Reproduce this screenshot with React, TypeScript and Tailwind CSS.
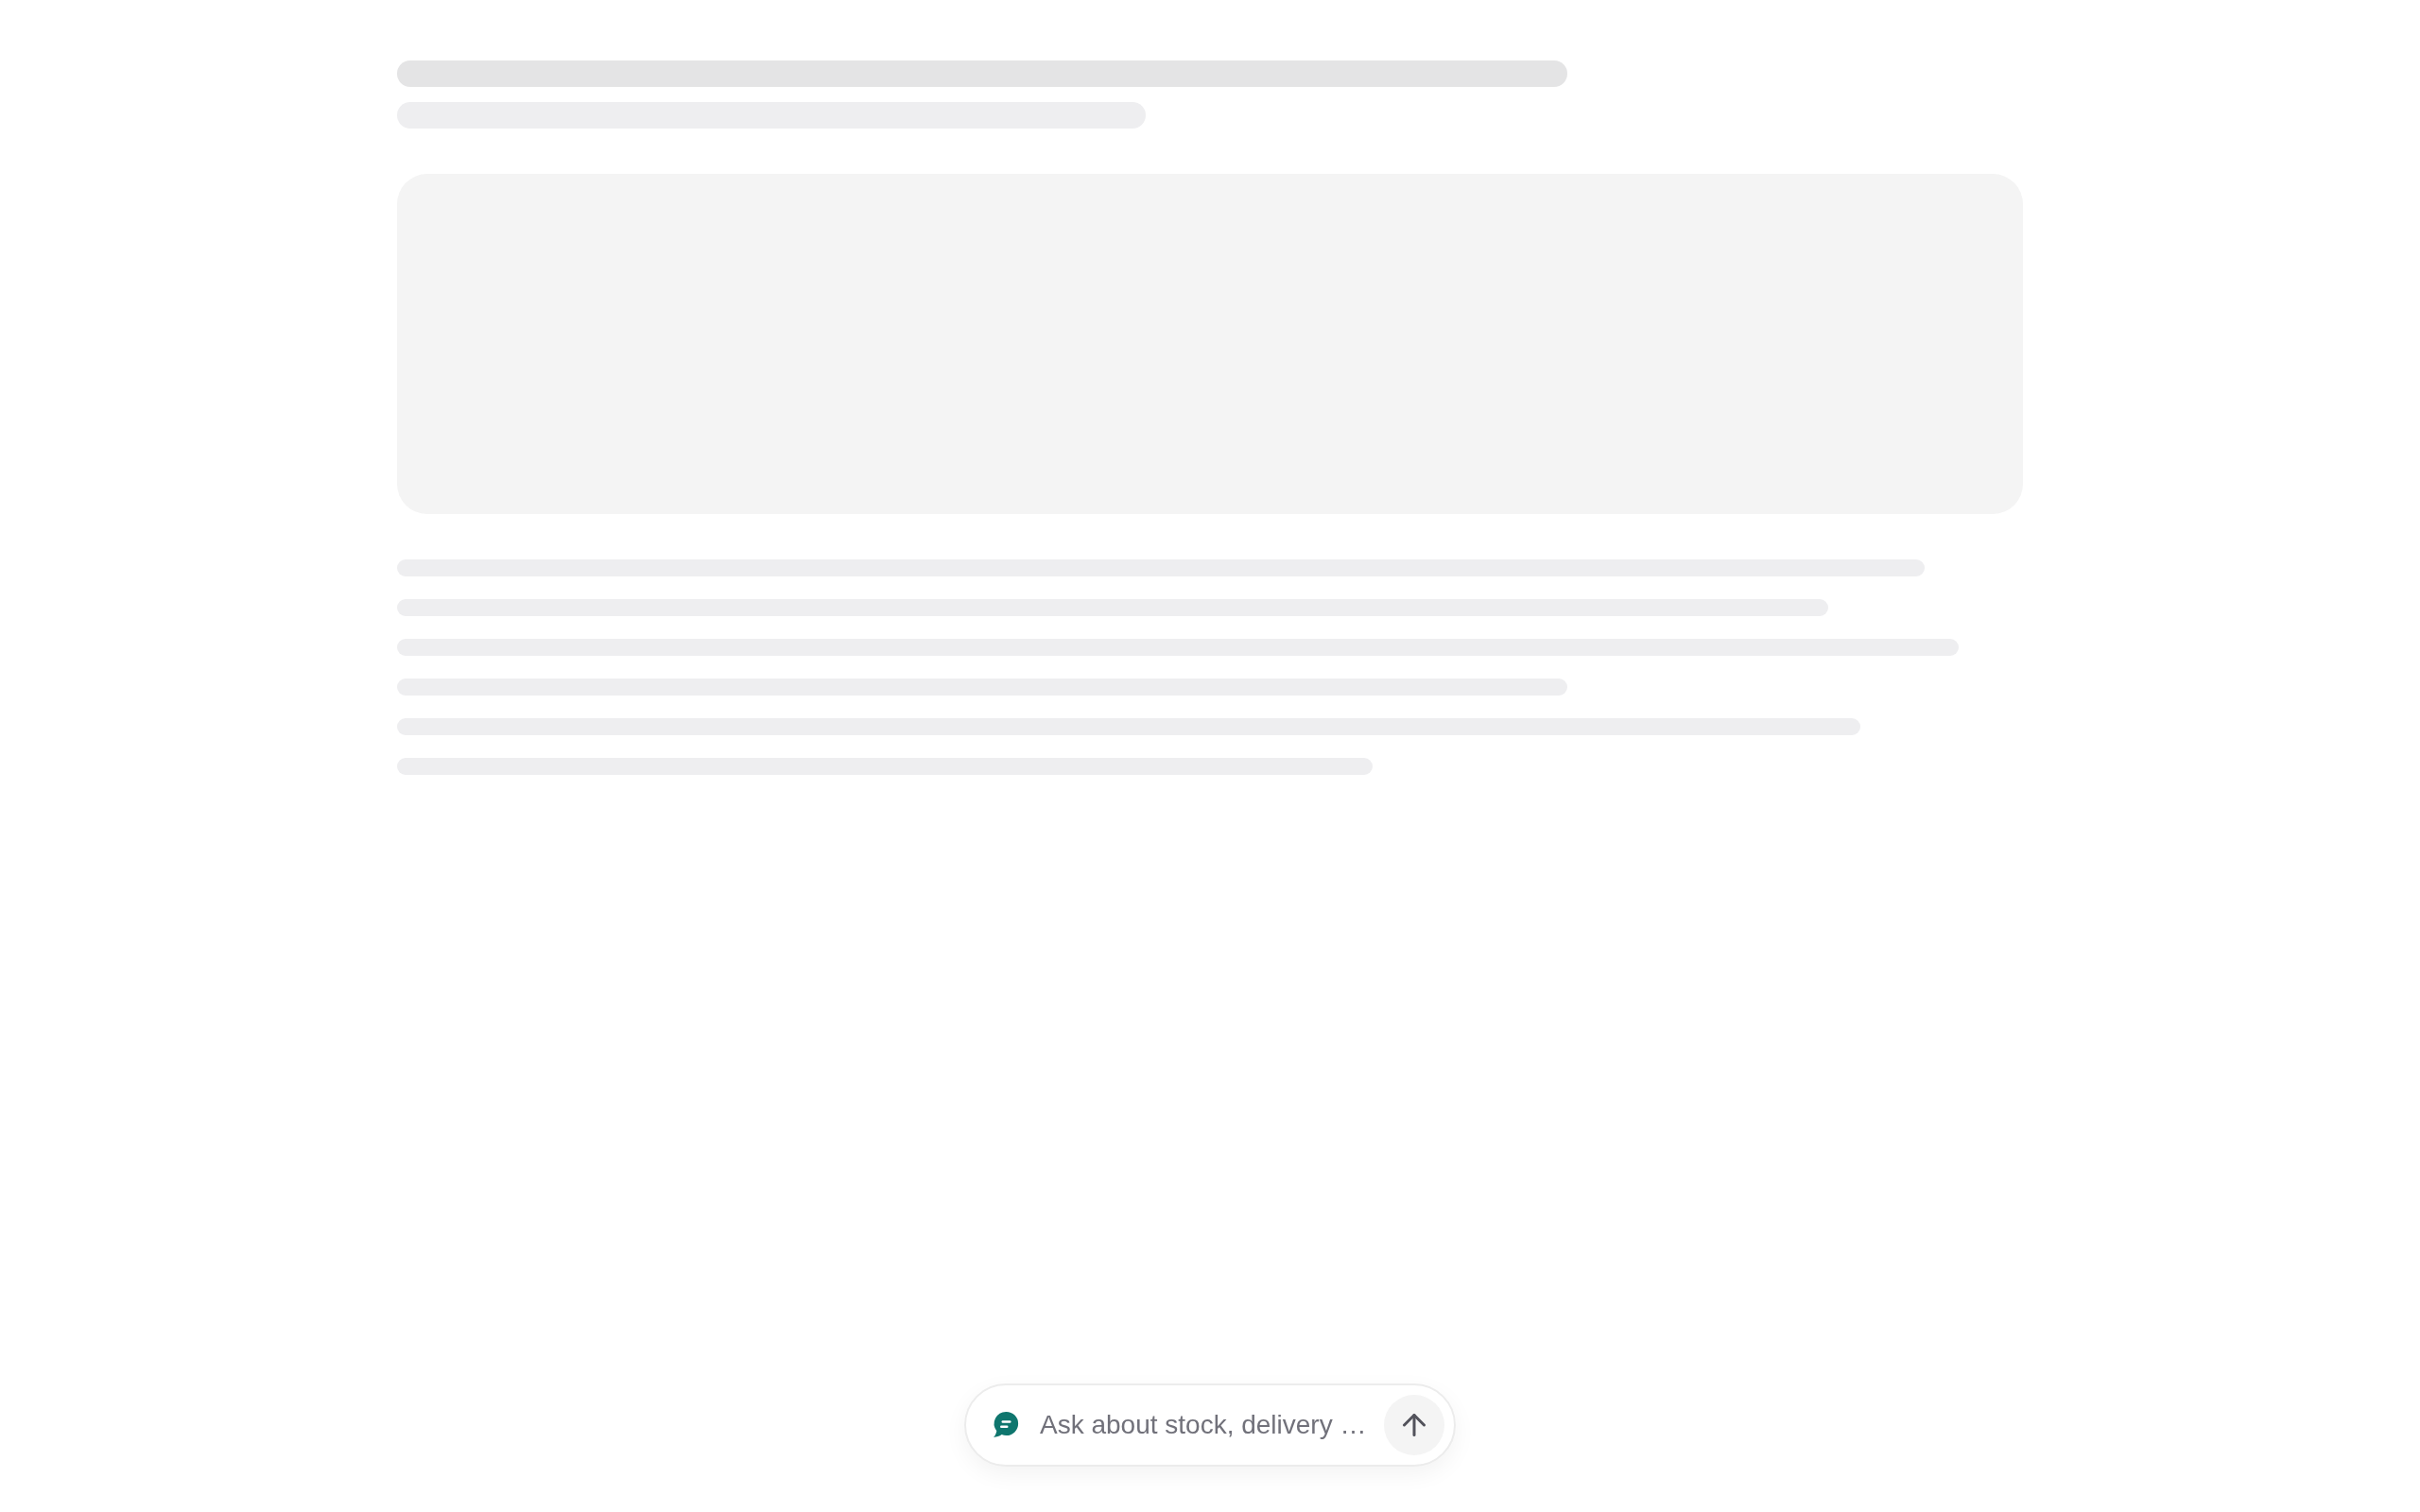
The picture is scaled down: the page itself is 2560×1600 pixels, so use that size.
import React from 'react'
import { ArrowUp } from 'lucide-react'

const lines = [
  { id: 1, width: 'w-[1616px]' },
  { id: 2, width: 'w-[1514px]' },
  { id: 3, width: 'w-[1652px]' },
  { id: 4, width: 'w-[1238px]' },
  { id: 5, width: 'w-[1548px]' },
  { id: 6, width: 'w-[1032px]' },
]

const ChatIcon = () => (
  <svg viewBox="0 0 32 32" className="w-8 h-8 shrink-0" aria-hidden="true">
    <path
      d="M18.5 1.900a12.600 12.600 0 1 1 0 25.200c-1.700 0-3.300-.3-4.800-1C11.200 27.800 8.500 28.800 5 29c1.700-1.800 2.800-3.900 3.300-6.800A12.600 12.600 0 0 1 18.500 1.900Z"
      fill="#0f766e"
    />
    <rect x="13.500" y="11.200" width="10" height="2.500" rx="1.250" fill="#ffffff" />
    <rect x="12" y="16.600" width="8.500" height="2.500" rx="1.250" fill="#ffffff" />
  </svg>
)

export default function App() {
  return (
    <div className="relative min-h-screen bg-white font-['Liberation_Sans',Arial,sans-serif]">
      <main className="w-[1720px] mx-auto pt-16">
        <div className="flex flex-col gap-4">
          <div className="h-7 w-[1238px] rounded-full bg-[#e4e4e5]" />
          <div className="h-7 w-[792px] rounded-full bg-[#eeeef0]" />
        </div>

        <div className="mt-12 h-[360px] rounded-[32px] bg-[#f4f4f4]" />

        <div className="mt-12 flex flex-col gap-6">
          {lines.map((line) => (
            <div key={line.id} className={`h-[18px] rounded-full bg-[#eeeef0] ${line.width}`} />
          ))}
        </div>
      </main>

      <div className="fixed bottom-12 left-1/2 -translate-x-1/2 w-[520px] h-[88px] flex items-center pl-6 pr-[10px] rounded-full bg-white border-2 border-[#ececec] shadow-[0_8px_24px_rgba(0,0,0,0.05)]">
        <ChatIcon />
        <span className="ml-[22px] flex-1 whitespace-nowrap text-[28px] leading-9 text-[#71717a]">
          Ask about stock, delivery …
        </span>
        <button className="w-16 h-16 shrink-0 flex items-center justify-center rounded-full bg-[#f4f4f4] text-[#52525b]">
          <ArrowUp className="w-9 h-9" />
        </button>
      </div>
    </div>
  )
}
